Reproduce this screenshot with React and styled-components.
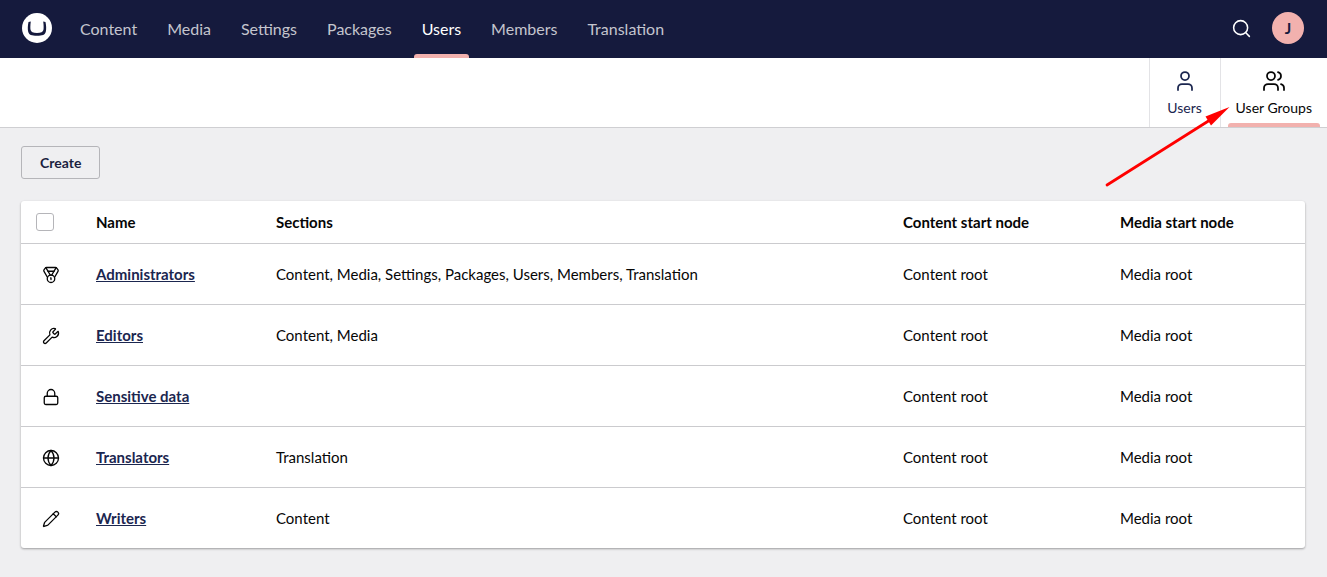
import React from "react";
import styled, { createGlobalStyle } from "styled-components";
import {
  Globe,
  Lock,
  Medal,
  Pencil,
  Search,
  User,
  Users,
  Wrench,
} from "lucide-react";

const GlobalStyle = createGlobalStyle`
  *, *::before, *::after { box-sizing: border-box; }
  body {
    margin: 0;
    background: #efeff1;
    color: #060606;
    font-family: Lato, "Liberation Sans", sans-serif;
    font-size: 15px;
    line-height: 24px;
  }
`;

const Page = styled.div`
  position: relative;
  min-height: 100vh;
`;

const Header = styled.header`
  display: flex;
  align-items: center;
  height: 58px;
  padding: 0 23px 0 22px;
  background: #151a3d;
`;

const LogoButton = styled.button`
  display: flex;
  margin: 0 13px 2px 0;
  padding: 0;
  border: 0;
  background: none;
`;

const Sections = styled.nav`
  display: flex;
  flex: 1;
  align-self: stretch;
`;

const Indicated = styled.a`
  position: relative;
  text-decoration: none;

  &::after {
    content: "";
    display: ${(p) => (p.$active ? "block" : "none")};
    position: absolute;
    left: 7px;
    right: 7px;
    bottom: 0;
    height: 4px;
    border-radius: 3px 3px 0 0;
    background: #f2b1ae;
  }
`;

const SectionTab = styled(Indicated)`
  display: flex;
  align-items: center;
  padding: 0 15px;
  color: ${(p) => (p.$active ? "#ffffff" : "#c4c5ce")};
  font-size: 16px;
`;

const HeaderActions = styled.div`
  display: flex;
  align-items: center;
  gap: 20px;
  padding-bottom: 2px;
`;

const IconButton = styled.button`
  display: flex;
  padding: 0;
  border: 0;
  background: none;
  color: #ffffff;
`;

const Avatar = styled.button`
  width: 32px;
  height: 32px;
  padding: 0;
  border: 0;
  border-radius: 50%;
  background: #f2b1ae;
  color: #151a3d;
  font: 700 15px/32px Lato, "Liberation Sans", sans-serif;
`;

const ViewBar = styled.nav`
  display: flex;
  justify-content: flex-end;
  height: 70px;
  border-bottom: 1px solid #cfcfd2;
  background: #ffffff;
`;

const ViewTab = styled(Indicated)`
  display: flex;
  flex-direction: column;
  align-items: center;
  gap: 5px;
  min-width: 71px;
  padding: 11px 15px 0;
  border-left: 1px solid #e3e3e6;
  color: ${(p) => (p.$active ? "#060606" : "#1b264f")};
  font-size: 14px;
  line-height: 20px;
`;

const Main = styled.main`
  padding: 18px 22px 28px 21px;
`;

const CreateButton = styled.button`
  display: block;
  height: 33px;
  margin-bottom: 22px;
  padding: 0 18px;
  border: 1px solid #b5b5b9;
  border-radius: 3px;
  background: transparent;
  color: #1b1f3f;
  font: 700 14px/20px Lato, "Liberation Sans", sans-serif;
`;

const Card = styled.div`
  border-radius: 3px;
  background: #ffffff;
  box-shadow: 0 1px 3px rgba(0, 0, 0, 0.12), 0 1px 2px rgba(0, 0, 0, 0.24);
`;

const Table = styled.table`
  width: 100%;
  border-collapse: separate;
  border-spacing: 0;
  table-layout: fixed;
`;

const Column = styled.col`
  width: ${(p) => (p.$width ? `${p.$width}px` : "auto")};
`;

const HeadCell = styled.th`
  height: 42px;
  padding: 0 15px;
  font-weight: 700;
  text-align: left;
`;

const Cell = styled.td`
  height: 61px;
  padding: 0 15px;
  border-top: 1px solid #cbcbce;
`;

const IconCell = styled(Cell)`
  padding: 1px 1px 0 0;

  svg {
    display: block;
    margin: 0 auto;
  }
`;

const Checkbox = styled.input`
  appearance: none;
  display: block;
  width: 18px;
  height: 18px;
  margin: 0;
  border: 1px solid #b5b5b9;
  border-radius: 3px;
  background: #ffffff;
`;

const GroupLink = styled.a`
  color: #1b264f;
  font-weight: 700;
`;

const Arrow = styled.svg`
  position: absolute;
  top: 104px;
  right: 97px;
  pointer-events: none;
`;

const sections = [
  "Content",
  "Media",
  "Settings",
  "Packages",
  "Users",
  "Members",
  "Translation",
];

const groups = [
  {
    icon: Medal,
    name: "Administrators",
    sections:
      "Content, Media, Settings, Packages, Users, Members, Translation",
  },
  { icon: Wrench, name: "Editors", sections: "Content, Media" },
  { icon: Lock, name: "Sensitive data", sections: "" },
  { icon: Globe, name: "Translators", sections: "Translation" },
  { icon: Pencil, name: "Writers", sections: "Content" },
];

function Logo() {
  return (
    <svg width="30" height="30" viewBox="0 0 30 30" aria-hidden="true">
      <circle cx="15" cy="15" r="15" fill="#ffffff" />
      <path
        d="M6.500 8.900 C5.700 12.500 5.600 16.200 6.200 18.700 C7 21.900 9.600 22.700 15 22.700 C20.400 22.700 23 21.900 23.800 18.700 C24.400 16.200 24.300 12.500 23.500 8.900 L21.200 8.600 C21.700 12.200 21.800 15.200 21.400 17.100 C20.900 19.300 19 19.900 15 19.900 C11 19.900 9.100 19.300 8.600 17.100 C8.200 15.200 8.300 12.200 8.800 8.600 Z"
        fill="#151a3d"
      />
    </svg>
  );
}

export default function App() {
  return (
    <Page>
      <GlobalStyle />
      <Header>
        <LogoButton type="button" aria-label="Umbraco">
          <Logo />
        </LogoButton>
        <Sections aria-label="Sections">
          {sections.map((label) => (
            <SectionTab key={label} href="#" $active={label === "Users"}>
              {label}
            </SectionTab>
          ))}
        </Sections>
        <HeaderActions>
          <IconButton type="button" aria-label="Search">
            <Search size={21} strokeWidth={1.75} />
          </IconButton>
          <Avatar type="button">J</Avatar>
        </HeaderActions>
      </Header>
      <ViewBar aria-label="Views">
        <ViewTab href="#">
          <User size={24} strokeWidth={1.75} />
          Users
        </ViewTab>
        <ViewTab href="#" $active>
          <Users size={24} strokeWidth={1.75} />
          User Groups
        </ViewTab>
      </ViewBar>
      <Main>
        <CreateButton type="button">Create</CreateButton>
        <Card>
          <Table>
            <colgroup>
              <Column $width={60} />
              <Column $width={180} />
              <Column />
              <Column $width={217} />
              <Column $width={200} />
            </colgroup>
            <thead>
              <tr>
                <HeadCell>
                  <Checkbox type="checkbox" aria-label="Select all" />
                </HeadCell>
                <HeadCell>Name</HeadCell>
                <HeadCell>Sections</HeadCell>
                <HeadCell>Content start node</HeadCell>
                <HeadCell>Media start node</HeadCell>
              </tr>
            </thead>
            <tbody>
              {groups.map(({ icon: Icon, name, sections: access }) => (
                <tr key={name}>
                  <IconCell>
                    <Icon size={18} strokeWidth={1.75} />
                  </IconCell>
                  <Cell>
                    <GroupLink href="#">{name}</GroupLink>
                  </Cell>
                  <Cell>{access}</Cell>
                  <Cell>Content root</Cell>
                  <Cell>Media root</Cell>
                </tr>
              ))}
            </tbody>
          </Table>
        </Card>
      </Main>
      <Arrow width="126" height="84" viewBox="0 0 126 84" aria-hidden="true">
        <path
          d="M3 81 L106 16"
          stroke="#ff0000"
          strokeWidth="2.7"
          strokeLinecap="round"
        />
        <path d="M125.500 3 L101.500 12.500 L107 21.500 Z" fill="#ff0000" />
      </Arrow>
    </Page>
  );
}
